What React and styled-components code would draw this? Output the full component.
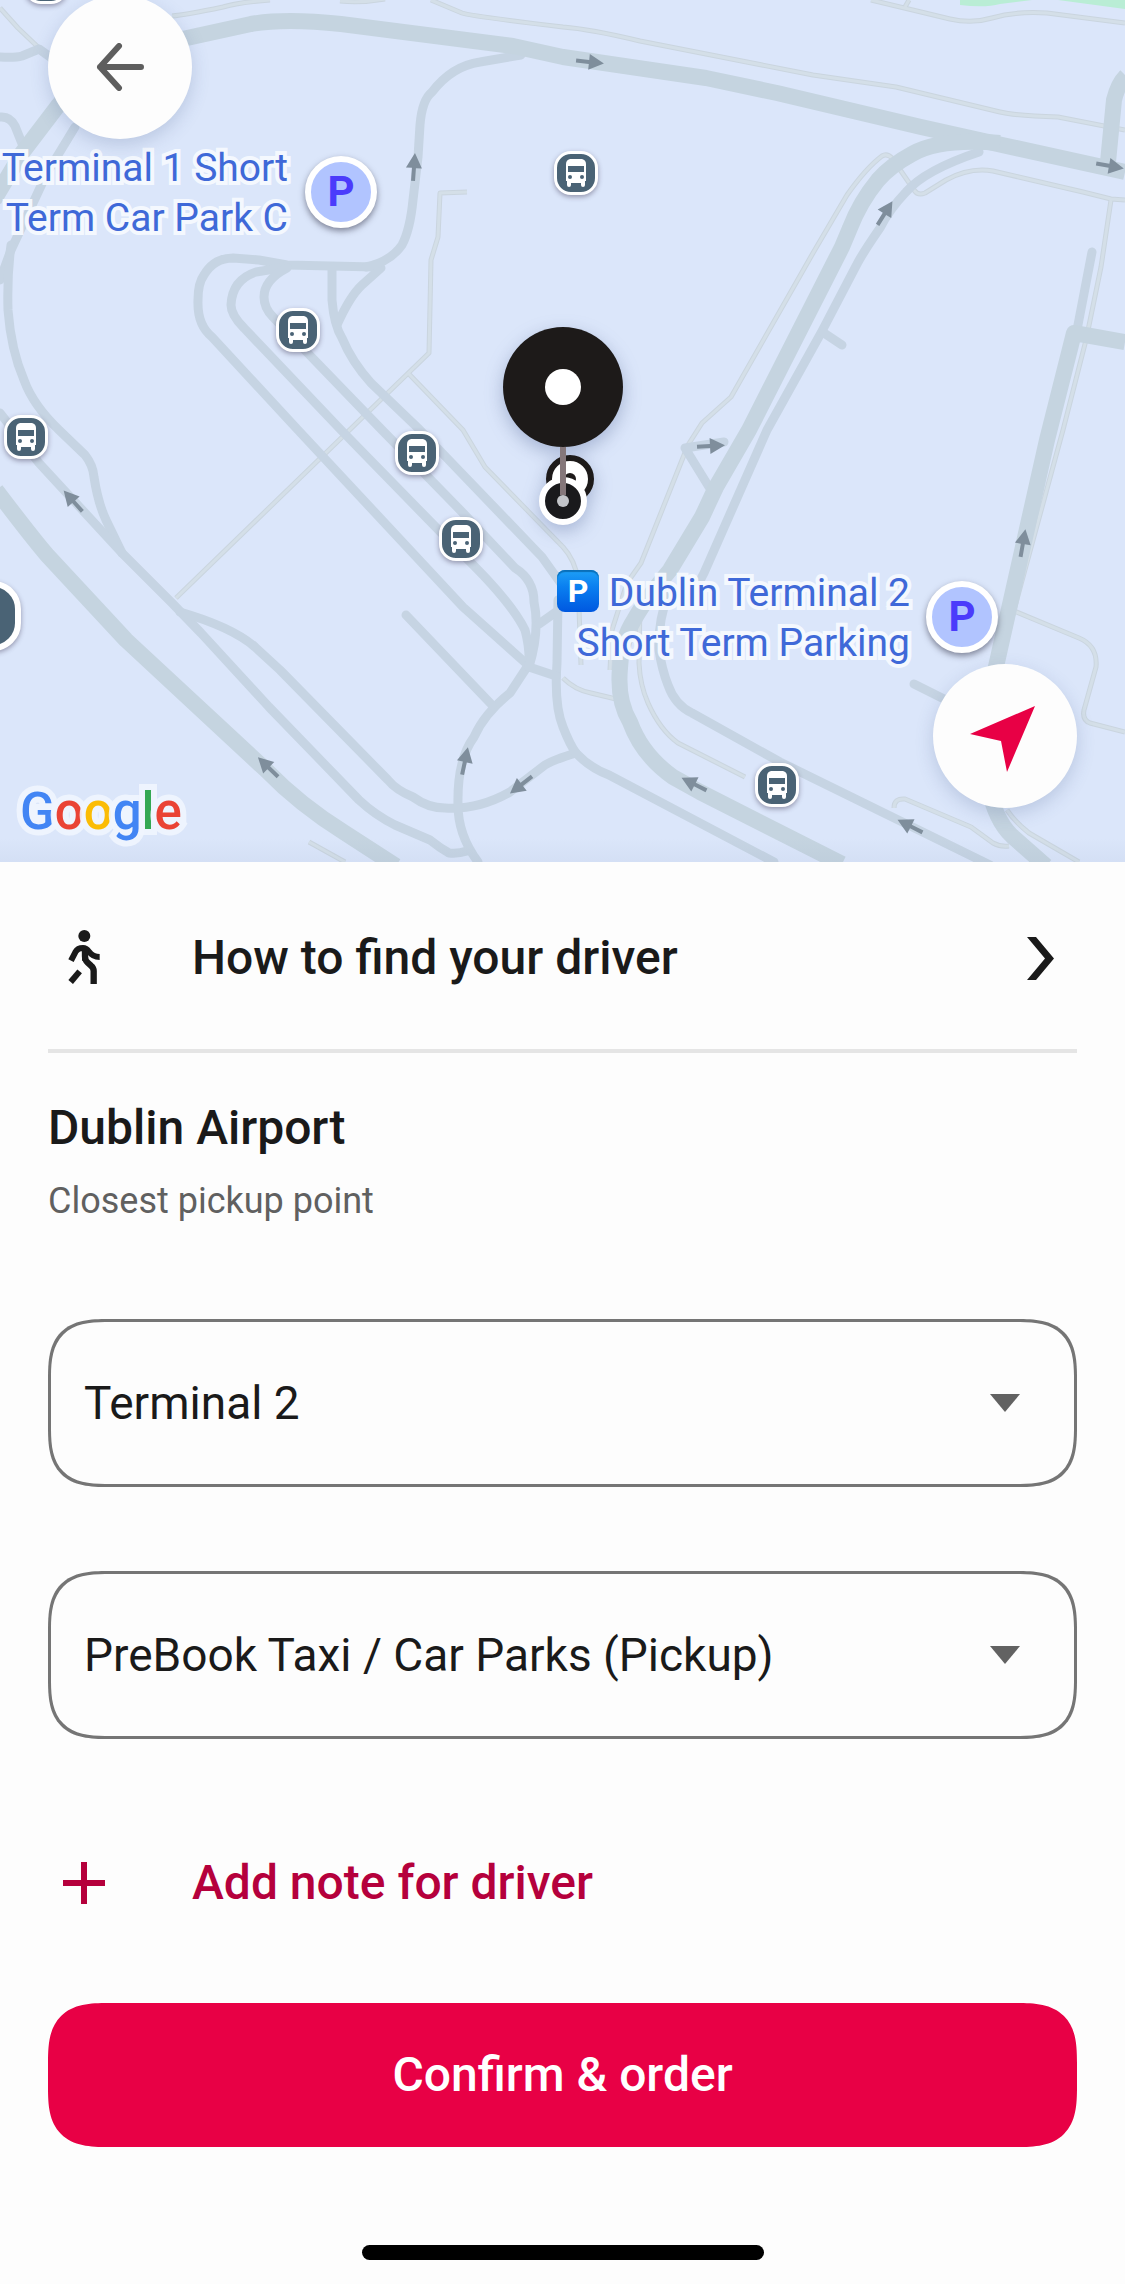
import React from 'react'
import { useState } from 'react';
import styled, { createGlobalStyle } from 'styled-components'

const GlobalStyle = createGlobalStyle`
  *, *::before, *::after { box-sizing: border-box; }
  body {
    margin: 0;
    background-color: #fdfdfd;
    font-family: Roboto, "Liberation Sans", sans-serif;
    color: #1a1a1a;
  }
  button, select { font-family: inherit; }
`;

const Screen = styled.main`
  width: 100%;
  overflow: hidden;
`;

/* ---------- map ---------- */
const MapArea = styled.section`
  position: relative;
  width: 100%;
  aspect-ratio: 1125 / 862;
  overflow: hidden;
  background-color: #dbe6fa;
`;
const MapDrawing = styled.svg`
  display: block;
  width: 100%;
  height: 100%;
`;
// pins are placed by their share of the 1125 x 862 map canvas
const Pin = styled.div`
  position: absolute;
  left: ${({ $x }) => ($x / 1125) * 100}%;
  top: ${({ $y }) => ($y / 862) * 100}%;
  transform: translate(-50%, -50%);
  display: flex;
  align-items: center;
  justify-content: center;
`;
const BusPin = styled(Pin)`
  width: ${({ $size }) => $size || 44}px;
  height: ${({ $size }) => $size || 44}px;
  border: ${({ $size }) => ($size ? 6 : 3)}px solid white;
  border-radius: ${({ $size }) => ($size ? 28 : 17)}px;
  background-color: #4a6375;
  box-shadow: 0 2px 5px rgba(60, 50, 80, 0.45);
`;
const ParkingPin = styled(Pin)`
  width: 72px;
  height: 72px;
  border: 6px solid white;
  border-radius: 50%;
  background-color: #b1c4ff;
  color: #4b3bfb;
  font-size: 42px;
  font-weight: 700;
  line-height: 50px;
  box-shadow: 0 3px 6px rgba(50, 50, 70, 0.55);
`;
const PlaceLabel = styled.div`
  position: absolute;
  right: ${({ $right }) => ((1125 - $right) / 1125) * 100}%;
  top: ${({ $top }) => ($top / 862) * 100}%;
  text-align: right;
  white-space: nowrap;
  font-size: 39px;
  line-height: 50px;
  color: #3f69d8;
  -webkit-text-stroke: 8px rgba(246, 250, 255, 0.95);
  paint-order: stroke fill;
  stroke-linejoin: round;
`;
const LabelBadge = styled.span`
  display: inline-block;
  width: 42px;
  height: 42px;
  border-radius: 8px;
  background: linear-gradient(#1ea0f6, #0a7ff0 40%, #0058e0);
  box-shadow: inset 0 2px 1px #0a6fb8;
  color: white;
  font-size: 32px;
  font-weight: 700;
  line-height: 42px;
  text-align: center;
  vertical-align: 4px;
  -webkit-text-stroke: 0;
`;
const GoogleMark = styled.div`
  position: absolute;
  left: 20px;
  bottom: 20px;
  font-size: 51px;
  font-weight: 500;
  line-height: 60px;
  -webkit-text-stroke: 12px rgba(240, 245, 254, 0.9);
  paint-order: stroke fill;
  stroke-linejoin: round;
`;
const Letter = styled.span`
  color: ${({ $color }) => $color};
`;
const RoundButton = styled.button`
  position: absolute;
  display: flex;
  align-items: center;
  justify-content: center;
  width: 144px;
  height: 144px;
  padding: 0;
  border: none;
  border-radius: 50%;
  background-color: #fdfdfd;
  box-shadow: 0 6px 18px rgba(70, 90, 140, 0.22);
  cursor: pointer;
`;
const BackButton = styled(RoundButton)`
  left: 48px;
  top: -5px;
`;
const LocateButton = styled(RoundButton)`
  right: 48px;
  bottom: 54px;
`;

/* ---------- sheet ---------- */
const Sheet = styled.section`
  display: flex;
  flex-direction: column;
  padding: 0 48px 26px;
  background-color: #fdfdfd;
`;
const RowButton = styled.button`
  display: flex;
  align-items: center;
  width: 100%;
  padding: 0;
  border: none;
  background: none;
  text-align: left;
  font-size: 48px;
  font-weight: 500;
  line-height: 56px;
  color: ${({ $accent }) => ($accent ? '#b5003c' : '#1a1a1a')};
  cursor: pointer;
`;
const FindDriver = styled(RowButton)`
  padding: 67px 0 62px;
  border-bottom: 4px solid #e5e5e5;
`;
const RowIcon = styled.span`
  display: flex;
  justify-content: center;
  flex: 0 0 72px;
  margin-right: 72px;
`;
const RowText = styled.span`
  flex: 1;
`;
const Chevron = styled.svg`
  flex: none;
  margin-right: 23px;
`;
const Title = styled.h1`
  margin: 47px 0 0;
  font-size: 48px;
  font-weight: 500;
  line-height: 56px;
`;
const Hint = styled.p`
  margin: 23px 0 96px;
  font-size: 36px;
  line-height: 44px;
  color: #606060;
`;
const Fields = styled.div`
  display: grid;
  gap: 84px;
  margin-bottom: 116px;
`;
const Field = styled.div`
  display: grid;
  align-items: center;
  & > * { grid-area: 1 / 1; }
`;
const Select = styled.select`
  appearance: none;
  width: 100%;
  height: 168px;
  padding: 0 108px 0 33px;
  border: 3px solid #757575;
  border-radius: 60px;
  corner-shape: superellipse(1.5);
  background-color: #fdfdfd;
  font-size: 46px;
  line-height: 56px;
  color: #1a1a1a;
`;
const Caret = styled.svg`
  justify-self: end;
  margin-right: 57px;
  pointer-events: none;
`;
const Confirm = styled.button`
  width: 100%;
  height: 144px;
  margin: 92px 0 98px;
  border: none;
  border-radius: 60px;
  corner-shape: superellipse(1.5);
  background-color: #e80045;
  color: white;
  font-size: 48px;
  font-weight: 500;
  line-height: 56px;
  cursor: pointer;
`;
const HomeBar = styled.div`
  align-self: center;
  width: 402px;
  max-width: 60%;
  height: 15px;
  border-radius: 8px;
  background-color: black;
`;

const paths = [
  'M0 8 L18 28 L39 48',
  'M172 16 Q185 15 223 7 Q240 2 270 0',
  'M340 1 Q362 3 385 -1',
  'M431 0 L462 13 Q470 16 563 27 Q590 29 640 41 L813 75 L896 87 L1000 112 Q1018 116 1058 117 L1125 130',
  'M871 0 L921 12 L950 19 Q972 24 992 18 Q1015 11 1047 13 L1125 23',
  'M909 0 L905 7',
  'M467 192 L440 193 L438 237 L431 260 L429 353 L176 598',
  'M408 373 L463 430 L485 467 L563 547 Q575 560 578 580 L581 665',
  'M563 678 Q575 690 591 693 L616 699',
  'M1125 200 L1111 199 L1083 192 L993 171 Q970 167 946 180 L925 193 Q918 196 914 190 L892 158 Q887 153 882 156 Q866 168 847 195 L813 253 L731 397 L702 423 L688 445 L641 563 L627 583 L612 630 L610 670',
  'M640 600 L639 663 Q640 685 648 703 Q660 730 678 743 L745 777',
  'M1111 200 L1101 267 L1086 340 L1063 430 L1014 610 L995 690',
  'M1014 611 L1079 638 Q1098 646 1096 667 L1084 710 Q1082 720 1090 723 L1125 732',
  'M894 808 Q894 798 905 799 L971 827 L993 843 Q1000 847 1009 846',
  'M1007 810 Q1015 822 1029 833 L1079 862',
  'M309 842 L345 862',
];

const lanes = [
  'M0 57 Q15 58 22 56 L39 49 L60 64',
  'M0 117 Q10 116 15 126 L23 146',
  'M75 127 L47 173 L11 250 L0 280',
  'M11 245 Q7 275 8 310 Q11 350 24 380 Q33 405 59 430 L85 455 Q93 465 94 477 Q98 503 106 520 L122 553',
  'M0 413 L39 463 L122 553 L172 603 L201 633 L269 707 L359 800 Q375 815 395 825 L430 840 Q440 848 449 853 Q458 854 467 851',
  'M180 612 Q232 627 255 647 L280 670 L388 780 Q396 790 413 797 Q428 808 445 808 Q478 810 510 792 L545 765 Q553 760 576 753',
  'M478 862 Q458 835 458 805 Q457 760 474 737 Q484 714 510 693 L529 664',
  'M406 615 L492 705',
  'M375 267 L287 265 L259 260 L233 258 Q214 258 204 275 Q198 283 198 300 Q197 325 212 337 L298 430 L463 607 L529 666',
  'M287 267 L256 272 Q232 280 231 305 Q231 315 244 328 L341 430 L461 553 Q510 600 525 630 Q530 648 529 667',
  'M287 268 Q264 280 264 297 Q264 308 273 317 L298 343 L382 430 L463 513 L515 568 Q534 580 534 602 Q540 630 529 667',
  'M332 267 L332 300 Q334 325 342 338 Q352 362 371 383 L420 430 L542 557 L562 585',
  'M337 325 Q350 296 362 285 L381 268',
  'M366 267 Q390 262 402 245 Q410 230 413 200 L418 157 L420 125 Q422 100 432 92 Q452 66 480 62 L521 55',
  'M539 624 L556 612',
  'M558 600 L557 663 Q554 705 563 727 Q570 745 576 753 Q590 768 609 775 L774 862',
  'M529 667 L556 676',
  'M979 152 Q925 170 906 192 Q889 210 880 228 Q862 254 856 266 L821 333 L767 430 L704 573 L690 600',
  'M668 596 Q658 620 659 650 Q662 670 668 685 Q675 705 692 713 L780 762 L990 865',
  'M824 333 L842 345',
  'M724 442 L685 448 L709 487',
  'M1092 252 L1077 330',
  'M914 684 L950 702',
];

const roads = [
  'M-6 200 L22 153 L57 107 L95 60 L120 52 L187 38 L251 24 Q285 18 341 24 L513 46 L563 57 L706 78 L777 93 L921 127 L993 143 L1125 172',
  'M1000 143 Q940 138 912 154 Q890 166 878 180 Q860 202 850 228 L842 247 L749 430 L716 487 L702 517 L670 570 Q645 600 634 620 Q621 640 620 668 Q617 700 630 722 Q642 755 673 777 L700 792 L842 864',
  'M-4 490 Q30 535 47 555 L126 640 L266 770 Q300 805 345 833 L396 866',
  'M1126 76 Q1118 84 1114 100 L1108 162',
  'M1125 342 L1074 333 L1047 440 L993 680 Q985 740 988 785 Q995 820 1012 836 L1046 866',
];

const flowArrows = [
  [414, 167, -86],
  [590, 62, 6],
  [1110, 166, 10],
  [885, 213, -58],
  [73, 501, -132],
  [268, 767, -136],
  [465, 761, -78],
  [521, 785, 142],
  [711, 446, -3],
  [1023, 543, -80],
  [694, 784, -153],
  [910, 826, -153],
];

const buses = [
  [46, -18], [298, 330], [576, 173], [26, 437], [417, 453], [461, 539], [777, 785],
];

const terminals = ['Terminal 2', 'Terminal 1'];
const pickups = ['PreBook Taxi / Car Parks (Pickup)', 'Taxi Rank'];

const BusIcon = () => (
  <svg width="22" height="28" viewBox="0 0 22 28" aria-hidden="true">
    <path fill="white" d="M5 0H17Q21 1 21 5V22H20V26Q20 28 18 28Q16 28 16 26V24H6V26Q6 28 4 28Q2 28 2 26V22H1V5Q1 1 5 0Z" />
    <path fill="#4a6375" d="M3 7H19V13H3Z" />
    <circle cx="5" cy="18" r="2" fill="#4a6375" />
    <circle cx="17" cy="18" r="2" fill="#4a6375" />
  </svg>
)

const Roads = () => (
  <MapDrawing viewBox="0 0 1125 862" preserveAspectRatio="xMidYMid slice" aria-hidden="true">
    <defs>
      <linearGradient id="edge" x1="0" y1="0" x2="0" y2="1">
        <stop offset="0" stopColor="#6478a0" stopOpacity="0" />
        <stop offset="1" stopColor="#6478a0" stopOpacity="0.06" />
      </linearGradient>
      <filter id="soft" x="-50%" y="-50%" width="200%" height="200%" colorInterpolationFilters="sRGB">
        <feDropShadow dx="0" dy="6" stdDeviation="9" floodColor="#465a8c" floodOpacity="0.35" />
      </filter>
    </defs>
    <path fill="#b9edd5" d="M960 0V5Q985 8 1000 4L1032 0ZM1058 0L1125 9V0Z" />
    <g fill="none" strokeLinejoin="round">
      {paths.map((d) => <path key={d} d={d} stroke="#cad5df" strokeWidth="5" />)}
      {paths.map((d) => <path key={d} d={d} stroke="#d4dfe8" strokeWidth="3" />)}
    </g>
    <g fill="none" stroke="#c6d4e3" strokeWidth="9" strokeLinecap="round" strokeLinejoin="round">
      {lanes.map((d) => <path key={d} d={d} />)}
    </g>
    <g fill="none" stroke="#c5d4e0" strokeWidth="16" strokeLinejoin="round">
      {roads.map((d) => <path key={d} d={d} />)}
    </g>
    {flowArrows.map(([x, y, angle]) => (
      <path
        key={`${x}-${y}`}
        transform={`translate(${x} ${y}) rotate(${angle})`}
        d="M-14 -2H-1V-8L14 0L-1 8V2H-14Z"
        fill="#7f8e9c"
      />
    ))}
    <rect y="838" width="1125" height="24" fill="url(#edge)" />
    <g filter="url(#soft)">
      <circle cx="570" cy="479" r="21" fill="white" stroke="#1d1a19" strokeWidth="6" />
      <circle cx="570" cy="479" r="6" fill="#1d1a19" />
      <circle cx="563" cy="501" r="21" fill="#1a1a1c" stroke="white" strokeWidth="6" />
      <circle cx="563" cy="387" r="60" fill="#1d1a19" />
    </g>
    <circle cx="563" cy="387" r="18" fill="white" />
    <path d="M563 447V495" stroke="#85777a" strokeWidth="6" />
    <circle cx="563" cy="501" r="6" fill="#c3c5c9" />
  </MapDrawing>
)

const WalkIcon = () => (
  <svg width="33" height="58" viewBox="53 30 99 174" aria-hidden="true">
    <circle cx="102" cy="51" r="18" fill="#1a1a1a" />
    <g fill="none" stroke="#1a1a1a" strokeWidth="18" strokeLinejoin="round">
      <path d="M62 125L76 98Q82 87 98 87Q108 87 116 98Q127 114 148 114" />
      <path d="M104 90V112Q104 124 112 131L122 140Q130 146 130 156V195" strokeWidth="19" />
      <path d="M88 157L61 189" />
    </g>
    <path d="M80 86H114L112 125H95V96Z" fill="#1a1a1a" />
  </svg>
)

const SelectField = ({ label, options }) => {
  const [value, setValue] = useState(options[0]);
  return (
    <Field>
      <Select aria-label={label} value={value} onChange={(e) => setValue(e.target.value)}>
        {options.map((option) => <option key={option}>{option}</option>)}
      </Select>
      <Caret width="30" height="18" viewBox="0 0 30 18" aria-hidden="true">
        <path d="M0 0H30L15 18Z" fill="#626262" />
      </Caret>
    </Field>
  )
}

const App = () => {
  return (
    <Screen>
      <GlobalStyle />
      <MapArea>
        <Roads />
        {buses.map(([x, y]) => (
          <BusPin key={`${x}-${y}`} $x={x} $y={y}><BusIcon /></BusPin>
        ))}
        <BusPin $x={-14} $y={616} $size={70}><BusIcon /></BusPin>
        <ParkingPin $x={341} $y={192}>P</ParkingPin>
        <ParkingPin $x={962} $y={617}>P</ParkingPin>
        <PlaceLabel $right={288} $top={143}>Terminal 1 Short<br />Term Car Park C</PlaceLabel>
        <PlaceLabel $right={910} $top={568}>
          <LabelBadge>P</LabelBadge> Dublin Terminal 2<br />Short Term Parking
        </PlaceLabel>
        <GoogleMark>
          <Letter $color="#4285f4">G</Letter>
          <Letter $color="#ea4335">o</Letter>
          <Letter $color="#fbbc05">o</Letter>
          <Letter $color="#4285f4">g</Letter>
          <Letter $color="#34a853">l</Letter>
          <Letter $color="#ea4335">e</Letter>
        </GoogleMark>
        <BackButton aria-label="Back">
          <svg width="48" height="48" viewBox="0 0 48 48" fill="none" stroke="#5e5e5e" strokeWidth="6" strokeLinecap="round" strokeLinejoin="round" aria-hidden="true">
            <path d="M45 24H4M23 3L4 24L23 45" />
          </svg>
        </BackButton>
        <LocateButton aria-label="My location">
          <svg width="144" height="144" viewBox="0 0 144 144" aria-hidden="true">
            <path d="M102 42L37 70L68 77L74 108Z" fill="#e80045" />
          </svg>
        </LocateButton>
      </MapArea>
      <Sheet>
        <FindDriver>
          <RowIcon><WalkIcon /></RowIcon>
          <RowText>How to find your driver</RowText>
          <Chevron width="27" height="43" viewBox="0 0 27 43" aria-hidden="true">
            <path d="M0 0H9L27 21.5L9 43H0L18 21.5Z" fill="#1a1a1a" />
          </Chevron>
        </FindDriver>
        <Title>Dublin Airport</Title>
        <Hint>Closest pickup point</Hint>
        <Fields>
          <SelectField label="Terminal" options={terminals} />
          <SelectField label="Pickup point" options={pickups} />
        </Fields>
        <RowButton $accent>
          <RowIcon>
            <svg width="42" height="42" viewBox="0 0 42 42" stroke="#b5003c" strokeWidth="6" aria-hidden="true">
              <path d="M21 0V42M0 21H42" />
            </svg>
          </RowIcon>
          <RowText>Add note for driver</RowText>
        </RowButton>
        <Confirm>Confirm &amp; order</Confirm>
        <HomeBar />
      </Sheet>
    </Screen>
  )
}

export default App
